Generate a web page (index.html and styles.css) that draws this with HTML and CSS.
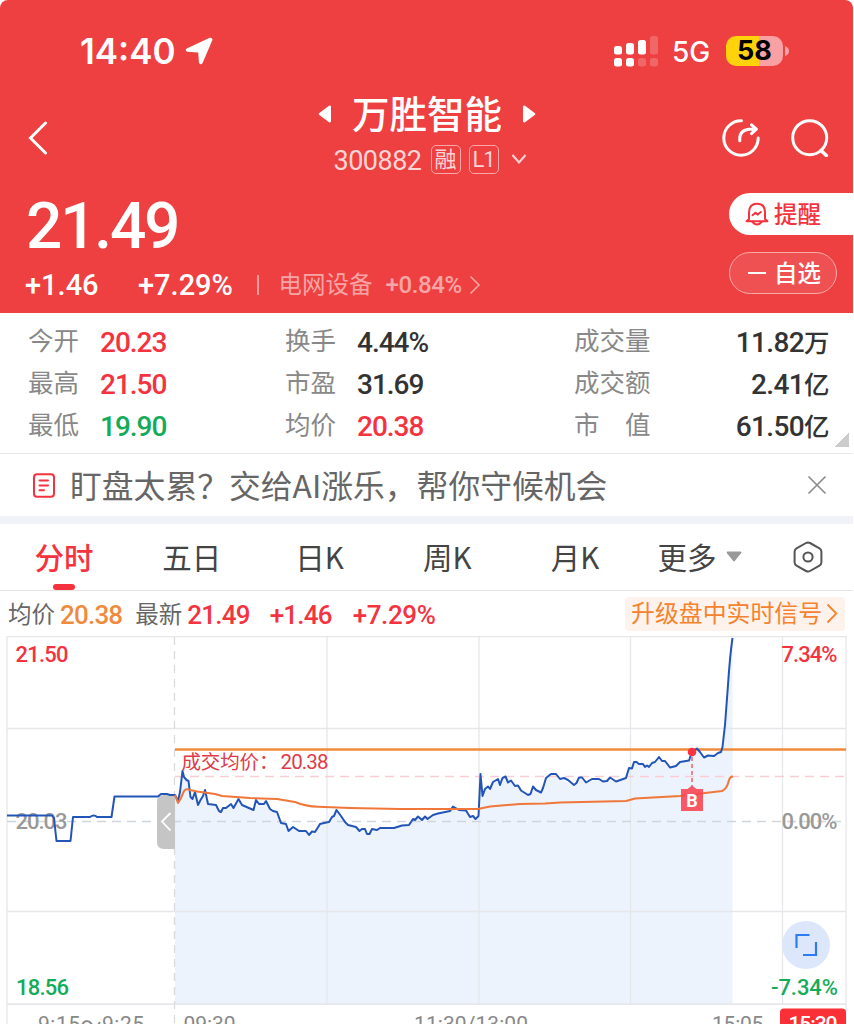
FILE: index.html
```html
<!DOCTYPE html>
<html lang="zh-CN">
<head>
  <meta charset="UTF-8" />
  <meta name="viewport" content="width=device-width, initial-scale=1.0" />
  <title>万胜智能 300882</title>
  <link rel="stylesheet" href="styles.css">
</head>
<body>

  <header>
    <div class="status">
      <span class="hora">14:40</span>
      <svg class="seta" width="28" height="28" viewBox="0 0 28 28"><path d="M1.7 11.6 24.8 .8Q28 .2 27.3 3.2L17.6 26Q15.8 28.6 14 26L13.2 15.4 2.2 14.8Q-.4 13.2 1.7 11.6z" fill="#fff"/></svg>
      <svg class="sinal" width="44" height="31" viewBox="0 0 44 31" fill="#fff">
        <rect x="0" y="10" width="8" height="8.5" rx="2.5"/>
        <rect x="12" y="7" width="8" height="11.5" rx="2.5"/>
        <rect x="24" y="4" width="8" height="14.5" rx="2.5"/>
        <rect x="36" y="0" width="8" height="18.5" rx="2.5" opacity=".2"/>
        <rect x="0" y="22" width="8" height="8.5" rx="2.5"/>
        <rect x="12" y="22" width="8" height="8.5" rx="2.5"/>
        <rect x="24" y="22" width="8" height="8.5" rx="2.5" opacity=".2"/>
        <rect x="36" y="22" width="8" height="8.5" rx="2.5" opacity=".2"/>
      </svg>
      <span class="rede">5G</span>
      <span class="bateria">58</span>
      <svg class="polo" width="4" height="10" viewBox="0 0 4 10"><path d="M0 0Q4 1.5 4 5T0 10z" fill="#f8a3a5"/></svg>
    </div>

    <div class="titulo">
      <svg class="voltar" width="20" height="34" viewBox="0 0 20 34"><path d="M17.5 2 2.5 17l15 15" fill="none" stroke="#fff" stroke-width="3" stroke-linecap="round"/></svg>
      <div class="nome">
        <h1>
          <svg width="14" height="18" viewBox="0 0 14 18"><path d="M1 8.2 11 .7Q13 0 13 2V16Q13 18 11 17.3L1 9.8Q.4 9 1 8.2z" fill="#fff"/></svg>
          <span>万胜智能</span>
          <svg width="14" height="18" viewBox="0 0 14 18"><path d="M13 8.2 3 .7Q1 0 1 2V16Q1 18 3 17.3L13 9.8Q13.6 9 13 8.2z" fill="#fff"/></svg>
        </h1>
        <p>
          <span class="codigo">300882</span>
          <span class="tag">融</span>
          <span class="tag l1">L1</span>
          <svg width="16" height="10" viewBox="0 0 16 10"><path d="M1.5 1 8 8.5 14.5 1" fill="none" stroke="#fbd5d6" stroke-width="2"/></svg>
        </p>
      </div>
      <div class="acoes">
        <svg width="38" height="38" viewBox="0 0 38 38" fill="none" stroke="#fff" stroke-width="3" stroke-linecap="round" stroke-linejoin="round">
          <path d="M19.5 1.8A17.2 17.2 0 1 0 36.2 19"/>
          <path d="M17.8 21.8Q17 11 27 10.2H34M29.5 5.8 34.4 10.2 29.5 14.6"/>
        </svg>
        <svg width="38" height="38" viewBox="0 0 38 38" fill="none" stroke="#fff" stroke-width="3" stroke-linecap="round">
          <circle cx="18.7" cy="18.7" r="17"/>
          <path d="M30 31.5 35.3 36.5" stroke-width="3.6"/>
        </svg>
      </div>
    </div>

    <div class="cotacao">
      <div class="valores">
        <div class="preco">21.49</div>
        <div class="variacao">
          <span class="v1">+1.46</span>
          <span class="v2">+7.29%</span>
          <i></i>
          <span class="setor">电网设备</span>
          <span class="v3">+0.84%</span>
          <svg width="12" height="20" viewBox="0 0 12 20"><path d="M1.5 1.5 10 10 1.5 18.5" fill="none" stroke="#f7a5a6" stroke-width="1.6"/></svg>
        </div>
      </div>
      <div class="botoes">
        <div class="alerta">
          <svg width="24" height="24" viewBox="0 0 24 24" fill="none" stroke="#f4333f" stroke-width="2" stroke-linecap="round" stroke-linejoin="round">
            <path d="M4 17V10.5Q4 1.7 12 1.7T20 10.5V17L22.4 19.2H1.6z"/>
            <path d="M7.5 20Q12 25.2 16.5 20"/>
            <path d="M7.5 13.2 10.5 10.8 12.8 12.6 15.8 10"/>
          </svg>
          <span>提醒</span>
        </div>
        <div class="favorito"><i></i><span>自选</span></div>
      </div>
    </div>
  </header>

  <section class="dados">
    <div class="linha"><span>今开</span><b class="alta">20.23</b><span>换手</span><b>4.44%</b><span>成交量</span><b class="dir">11.82<em>万</em></b></div>
    <div class="linha"><span>最高</span><b class="alta">21.50</b><span>市盈</span><b>31.69</b><span>成交额</span><b class="dir">2.41<em>亿</em></b></div>
    <div class="linha"><span>最低</span><b class="baixa">19.90</b><span>均价</span><b class="alta">20.38</b><span>市　值</span><b class="dir">61.50<em>亿</em></b></div>
  </section>

  <section class="aviso">
    <svg width="22" height="25" viewBox="0 0 22 25" fill="none" stroke="#f4333f" stroke-width="2" stroke-linecap="round">
      <rect x="1" y="1.2" width="20" height="22.6" rx="3"/>
      <path d="M6.5 7.5H15M6.5 12.4H15M6.5 17.3H11"/>
    </svg>
    <p>盯盘太累？交给AI涨乐，帮你守候机会</p>
    <svg width="20" height="20" viewBox="0 0 20 20"><path d="M1.5 1.5 18.5 18.5M18.5 1.5 1.5 18.5" stroke="#8c8c8c" stroke-width="1.7"/></svg>
  </section>

  <nav>
    <a class="ativo">分时</a>
    <a>五日</a>
    <a>日K</a>
    <a>周K</a>
    <a>月K</a>
    <a class="mais">更多 <svg width="16" height="11" viewBox="0 0 16 11"><path d="M1.5 .5H14.5Q16 .8 15 2.2L9 9.8Q8 11 7 9.8L1 2.2Q0 .8 1.5 .5z" fill="#999"/></svg></a>
    <a class="ajuste">
      <svg width="30" height="32" viewBox="0 0 30 32" fill="none" stroke="#555" stroke-width="2">
        <path d="M13 2Q15 .9 17 2L26.5 7.4Q28.4 8.5 28.4 10.7V21.3Q28.4 23.5 26.5 24.6L17 30Q15 31.1 13 30L3.5 24.6Q1.6 23.5 1.6 21.3V10.7Q1.6 8.5 3.5 7.4z"/>
        <circle cx="15" cy="16" r="4.6"/>
      </svg>
    </a>
  </nav>

  <section class="resumo">
    <span>均价</span><b class="media">20.38</b>
    <span class="ultimo">最新</span><b>21.49</b><b class="r1">+1.46</b><b class="r2">+7.29%</b>
    <div class="sinais"><span>升级盘中实时信号</span><svg width="12" height="21" viewBox="0 0 12 21"><path d="M1.5 1.5 10.3 10.5 1.5 19.5" fill="none" stroke="#f5822d" stroke-width="1.8"/></svg></div>
  </section>

  <svg class="grafico" width="854" height="388" viewBox="0 636 854 388">
    <!-- área -->
    <path fill="#ecf3fd" d="M175 1004V795L178 801 180 792 182.500 771 184 777 186.500 780 188.500 781 190.500 797 192.500 799 195 792 198 805 200.500 800 203 796 205 790 208 804 216 805 219 811 231 804 233.500 808 238.500 799 242 805 253.500 810 256 800 264 804 266 801 270 809 277 812 281 823 286 824 288.500 831 293 827 306 831 309 835 315 832 320 824 329 822 336.500 810 341 816 345 822 348 825 356 827 359.500 831 365 829 367 834 369.500 834 372 829 394 828 409 825 413 819 433 815 450 811 453 806.500 459 810 466 810.500 470 817 475.500 819 478.500 816 480.500 774 482.500 796 485 789 490 789 493 782 498 779 505.500 776.500 511 780.500 521 790.500 528 795 530.500 794 533 786.500 541 792.500 546 778 551 774 556 774 560 779 574 785 579 777.500 586 782.500 599 779 616 781.500 626 778 629 768 634 762 649 767 659 757 670 767.500 680 762 689 760.500 692 752 697 748.500 704 757.500 714 756 721 752 725 725 728 685 732.500 638V1004z"/>

    <!-- grade -->
    <g fill="none" stroke="#e6e7ea" stroke-width="1.3">
      <path d="M7 1024V636.600H846V1024M7 728.500H846M7 911.500H846M327 637V1004M479 637V1004M630.500 637V1004M782.500 637V1004"/>
      <path d="M7 1004.200H846" stroke-width="1.8"/>
      <path d="M174.500 637V1024" stroke="#d9dadd" stroke-dasharray="8 6"/>
    </g>
    <path d="M7 821.500H846" stroke="#cdd6dd" stroke-width="1.5" stroke-dasharray="9 6"/>
    <path d="M175 776.500H846" stroke="#f9cdd2" stroke-width="1.500" stroke-dasharray="9 6"/>

    <g class="eixo">
      <text x="15.500" y="662" class="alta" textLength="53">21.50</text>
      <text x="781.500" y="662" class="alta" textLength="56">7.34%</text>
      <text x="15.500" y="829" class="cinza" textLength="52">20.03</text>
      <text x="781.500" y="829" class="cinza" textLength="56">0.00%</text>
      <text x="16" y="995" class="baixa" textLength="53">18.56</text>
      <text x="771" y="995" class="baixa" textLength="67">-7.34%</text>
    </g>

    <path d="M175 749.500H846" stroke="#f08b3e" stroke-width="2.4"/>

    <!-- handle -->
    <path d="M175 795H164Q157 795 157 802V842Q157 849 164 849H175z" fill="#c5c5c5"/>
    <path d="M170.500 813 162 821.500 170.500 830.500" fill="none" stroke="#fff" stroke-width="1.8"/>

    <!-- preço -->
    <path class="preco-linha" d="M7 815.500H52L54 818 56.500 841H70.500L73 817H90Q94 814 97 817H111.500L114.500 796.500H158L161 794H167L170 795H175L178 801 180 792 182.500 771 184 777 186.500 780 188.500 781 190.500 797 192.500 799 195 792 198 805 200.500 800 203 796 205 790 208 804 216 805 219 811 221 812 223 808 226 808 231 804 233.500 808 238.500 799 242 805 253.500 810 256 800 259 804 264 804 266 801 270 809 273 811 277 812 281 823 286 824 288.500 831 293 827 299 831 306 831 309 835 312 831.500 315 832 320 824 324 823 329 822 332 817 334 816 336.500 810 341 816 345 822 348 825 352 826 356 827 359.500 831 362 829 365 829 367 834 369.500 834 372 829 377 830 380 828 394 828 402 825.500 409 825 413 819 415 820 418 816.500 422 820 425 816.500 427.500 819 433 815 438 813.500 450 811 453 806.500 459 810 466 810.500 470 817 473 816 475.500 819 478.500 816 480.500 774 482.500 796 485 789 488 786.500 490 789 493 782 498 779 500 785 502.500 778 505.500 776.500 508 782.500 511 780.500 515 786 518 785.500 521 790.500 528 795 530.500 794 533 786.500 536 790 541 792.500 543 788 546 778 551 774 556 774 560 779 564 778 568 780 574 785 576.500 783 579 777.500 582 777.500 586 782.500 592 779 599 779 603 781.500 607 781 610 777.500 616 781.500 626 778 629 768 632 768.500 634 762 636.500 762 639 764 643 764 645 767 647 765.500 649 767 652 763 655 762 659 757 662 761 665 761 670 767.500 676 766 680 762 689 760.500 692 752 697 748.500 700 752 704 757.500 708 755.500 714 756 718 753 721 752 722.500 747 725 725 728 685Q730 655 732.500 638"/>

    <!-- média -->
    <path class="media-linha" d="M175 795 178 803 180.500 799 184 791Q186 788 190 790L197 791.500 215 794 222 796 250 798 277 799 295 802Q306 806.500 318 806.700L350 808 400 809 478 809 490 806.500 520 804 545 803.500 560 802.500 626 801 635 798.500 680 796 722 791Q727 789 729 780 730 776.500 733 776.500"/>

    <text x="181.500" y="768.500" class="custo" textLength="97">成交均价：</text>
    <text x="280.500" y="769" class="custo num" textLength="48">20.38</text>

    <!-- compra -->
    <path d="M692 757V786" stroke="#f0606c" stroke-width="1.500" stroke-dasharray="4 3"/>
    <circle cx="692" cy="752" r="4.300" fill="#f8323f"/>
    <path d="M681 789H687.500L692 785.500 696.500 789H703V811H681z" fill="#f84a57" opacity=".92"/>
    <text x="692" y="806.500" class="compra">B</text>

    <circle cx="806" cy="945" r="24" fill="#dde7fc"/>
    <path d="M796.500 948V935H809.500M816 942V955H803" fill="none" stroke="#2e7bf6" stroke-width="2.200"/>

    <rect x="780" y="1008.500" width="66" height="24" rx="4" fill="#fb3036"/>
    <g class="eixo tempo">
      <text x="38" y="1030.500" textLength="106">9:15～9:25</text>
      <text x="183.500" y="1030.500" textLength="52">09:30</text>
      <text x="414" y="1030.500" textLength="114">11:30/13:00</text>
      <text x="712" y="1030.500" textLength="62">15:05 -</text>
      <text x="788.500" y="1031" textLength="49" class="fim">15:30</text>
    </g>
  </svg>

</body>
</html>
```
FILE: styles.css
```css
* {
  box-sizing: border-box;
}

body {
  margin: 0;
  width: 853px;
  height: 1024px;
  overflow: hidden;
  background-color: #fff;
  font-family: "Noto Sans CJK SC", sans-serif;
  color: #333;
}

svg {
  display: block;
  flex: none;
}

span,
b,
em {
  white-space: nowrap;
}

em {
  font-style: normal;
}

header {
  height: 313px;
  background-color: #ee4041;
  border-radius: 8px 8px 0 0;
  color: white;
}

.status {
  height: 90px;
  padding: 12px 0 0 80px;
  display: flex;
  align-items: center;
  font-family: Inter, sans-serif;
}

.hora {
  width: 105px;
  font-size: 35px;
  font-weight: 600;
}

.sinal {
  margin-left: 401px;
}

.rede {
  width: 54px;
  margin-left: 14px;
  padding-top: 2px;
  font-size: 28px;
  font-weight: 500;
}

.bateria {
  width: 57px;
  height: 30px;
  border-radius: 10px;
  background: linear-gradient(90deg, #fed30b 58%, #f8a0a3 58%);
  color: #000;
  font-size: 27px;
  font-weight: 700;
  line-height: 30px;
  text-align: center;
}

.polo {
  margin-left: 2px;
}

.titulo {
  height: 95px;
  padding: 0 24px 0 28px;
  display: flex;
  justify-content: space-between;
}

.voltar {
  margin-top: 31px;
}

.nome {
  padding-left: 84px;
}

h1 {
  margin: 0;
  height: 48px;
  display: flex;
  align-items: center;
  justify-content: center;
  gap: 20px;
  font-size: 37.5px;
  font-weight: 500;
}

h1 span {
  padding-bottom: 6px;
}

.nome p {
  margin: 6px 0 0;
  height: 30px;
  padding-left: 6px;
  display: flex;
  align-items: center;
  justify-content: center;
  color: #fbd5d6;
}

.codigo {
  width: 97px;
  padding-top: 3px;
  font: 27px Roboto, sans-serif;
  letter-spacing: -0.5px;
}

.tag {
  width: 30px;
  height: 29px;
  margin-right: 8px;
  border: 1.5px solid #f7a8a9;
  border-radius: 5px;
  font-size: 22px;
  line-height: 23px;
  text-align: center;
}

.l1 {
  margin-right: 12px;
  font-family: Roboto, sans-serif;
  line-height: 27px;
  letter-spacing: -1px;
}

.acoes {
  margin-top: 29px;
  display: flex;
  gap: 31px;
}

.cotacao {
  display: flex;
  justify-content: space-between;
}

.preco {
  height: 80px;
  padding-left: 26px;
  font: 500 64px/83px Roboto, sans-serif;
  letter-spacing: -2.2px;
}

.variacao {
  display: flex;
  align-items: center;
  height: 40px;
  padding-left: 25px;
  font: 500 29px Roboto, sans-serif;
}

.v1 {
  width: 113px;
}

.v2 {
  width: 119px;
}

.variacao i {
  width: 1.5px;
  height: 20px;
  margin-right: 20px;
  background-color: #f59a9b;
}

.setor {
  width: 107px;
  padding-bottom: 4px;
  font: 23.5px "Noto Sans CJK SC", sans-serif;
  color: #f7a5a6;
}

.v3 {
  width: 83px;
  font-size: 24px;
  letter-spacing: -0.4px;
  color: #f7a5a6;
}

.botoes {
  width: 124px;
  padding-top: 8px;
}

.botoes span {
  padding-bottom: 2px;
}

.alerta {
  height: 42px;
  display: flex;
  align-items: center;
  padding-left: 16px;
  gap: 5px;
  background-color: #fff;
  border-radius: 21px 0 0 21px;
  color: #f4333f;
  font-size: 23.5px;
  font-weight: 500;
}

.favorito {
  width: 108px;
  height: 42px;
  margin-top: 17px;
  display: flex;
  align-items: center;
  padding-left: 18px;
  gap: 8px;
  border: 1px solid #f8a9aa;
  border-radius: 21px;
  background-color: #ef5152;
  font-size: 23.5px;
  font-weight: 500;
}

.favorito i {
  width: 18px;
  height: 2px;
  background-color: white;
}

.dados {
  height: 141px;
  padding: 8px 24px 0 28px;
  border-bottom: 1.5px solid #e9e9eb;
  background: linear-gradient(135deg, transparent 50%, #ccc 50%) 834px 119px / 15px 15px no-repeat;
}

.linha {
  height: 42px;
  display: grid;
  grid-template-columns: 72px 185px 72px 217px 100px 1fr;
  align-items: center;
}

.linha span {
  padding-bottom: 6px;
  font-size: 25.5px;
  line-height: 36px;
  color: #888;
}

.linha b {
  padding-top: 1px;
  font: 500 28px/41px Roboto, sans-serif;
  letter-spacing: -1px;
}

.linha em {
  font: 500 25.5px/30px "Noto Sans CJK SC", sans-serif;
}

.linha .dir {
  text-align: right;
  letter-spacing: -0.6px;
}

.alta {
  color: #f4333f;
  fill: #f4333f;
}

.baixa {
  color: #16ab5a;
  fill: #16ab5a;
}

.aviso {
  height: 70px;
  padding: 0 26px 0 33px;
  display: flex;
  align-items: center;
  border-bottom: 8px solid #f2f3f9;
}

.aviso p {
  flex: 1;
  margin: 0 0 0 15px;
  padding-bottom: 3px;
  font-size: 31.8px;
  line-height: 56px;
  color: #666;
}

nav {
  height: 67px;
  display: grid;
  grid-template-columns: repeat(5, 127.8px) 122px 1fr;
  border-bottom: 1.5px solid #e4e4e6;
}

nav a {
  position: relative;
  display: flex;
  align-items: center;
  justify-content: center;
  padding-bottom: 2px;
  font-size: 29.5px;
  color: #444;
}

nav .ativo {
  color: #f4333f;
  font-weight: 500;
}

.ativo::after {
  content: "";
  position: absolute;
  left: 53px;
  bottom: 0;
  width: 22px;
  height: 6px;
  border-radius: 3px;
  background-color: #f4333f;
}

nav .mais {
  gap: 10px;
}

nav .ajuste {
  padding: 0 0 0 3px;
}

.resumo {
  height: 45px;
  padding: 2px 8px 0;
  display: flex;
  align-items: center;
  font-size: 23.5px;
  color: #666;
}

.resumo span {
  padding-bottom: 4px;
}

.resumo b {
  margin-left: 5px;
  font: 500 26px Roboto, sans-serif;
  letter-spacing: -0.8px;
  color: #f4333f;
}

.resumo .media {
  color: #f08b3e;
}

.ultimo {
  margin-left: 13px;
}

.resumo .r1 {
  margin-left: 20px;
}

.resumo .r2 {
  margin-left: 21px;
  letter-spacing: -0.4px;
}

.sinais {
  width: 220px;
  height: 34px;
  margin-left: auto;
  margin-bottom: 2px;
  padding-left: 6px;
  display: flex;
  align-items: center;
  gap: 4px;
  border-radius: 4px;
  background-color: #fef3ec;
  font-size: 23.9px;
  color: #f5822d;
}

.preco-linha {
  fill: none;
  stroke: #2355b8;
  stroke-width: 2;
  stroke-linejoin: round;
}

.media-linha {
  fill: none;
  stroke: #f0763a;
  stroke-width: 2;
  stroke-linejoin: round;
}

.eixo {
  font: 500 22px Roboto, "Noto Sans CJK SC", sans-serif;
}

.cinza {
  fill: #999;
}

.tempo {
  font-weight: 400;
  font-size: 21px;
  fill: #888;
}

.fim {
  font-weight: 500;
  fill: #fff;
}

.custo {
  font-size: 19.5px;
  fill: #e03a47;
}

.num {
  font: 20.5px Roboto, sans-serif;
}

.compra {
  font: 700 18px Roboto, sans-serif;
  fill: #fff;
  text-anchor: middle;
}
```
